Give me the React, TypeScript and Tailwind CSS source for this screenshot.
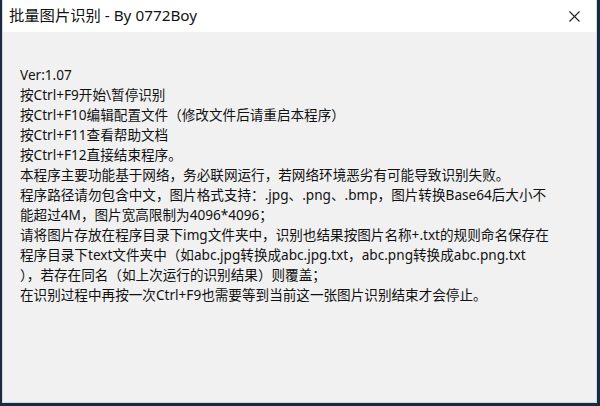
const lines = [
  "Ver:1.07",
  "按Ctrl+F9开始\\暂停识别",
  "按Ctrl+F10编辑配置文件（修改文件后请重启本程序）",
  "按Ctrl+F11查看帮助文档",
  "按Ctrl+F12直接结束程序。",
  "本程序主要功能基于网络，务必联网运行，若网络环境恶劣有可能导致识别失败。",
  "程序路径请勿包含中文，图片格式支持：.jpg、.png、.bmp，图片转换Base64后大小不",
  "能超过4M，图片宽高限制为4096*4096；",
  "请将图片存放在程序目录下img文件夹中，识别也结果按图片名称+.txt的规则命名保存在",
  "程序目录下text文件夹中（如abc.jpg转换成abc.jpg.txt，abc.png转换成abc.png.txt",
  "），若存在同名（如上次运行的识别结果）则覆盖；",
  "在识别过程中再按一次Ctrl+F9也需要等到当前这一张图片识别结束才会停止。",
];

export default function App() {
  return (
    <div className="w-[600px] h-[406px] bg-[#1c2a3b] pl-[2px] pr-[3px] pb-[3px] font-['Noto_Sans','Noto_Sans_CJK_SC',sans-serif]">
      <div className="h-full flex flex-col border border-t-0 border-[#c9dcea] bg-[#f1f1f1]">
        {/* title bar */}
        <div className="h-[32px] shrink-0 bg-white flex items-center justify-between">
          <span className="pl-[6px] text-[15.3px] text-[#111] leading-none">批量图片识别 - By 0772Boy</span>
          <div className="w-[46px] h-full flex items-center justify-center mr-[-1px]">
            <svg width="11" height="11" viewBox="0 0 11 11" fill="none">
              <path d="M0.5 0.5 L10.5 10.5 M10.5 0.5 L0.5 10.5" stroke="#222" strokeWidth="1.1" />
            </svg>
          </div>
        </div>
        {/* body */}
        <div className="flex-1 pt-[33px] pl-[17px] text-[13.6px] leading-[20px] text-[#111]">
          {lines.map((l) => (
            <div key={l} className="whitespace-nowrap">{l}</div>
          ))}
        </div>
      </div>
    </div>
  );
}
